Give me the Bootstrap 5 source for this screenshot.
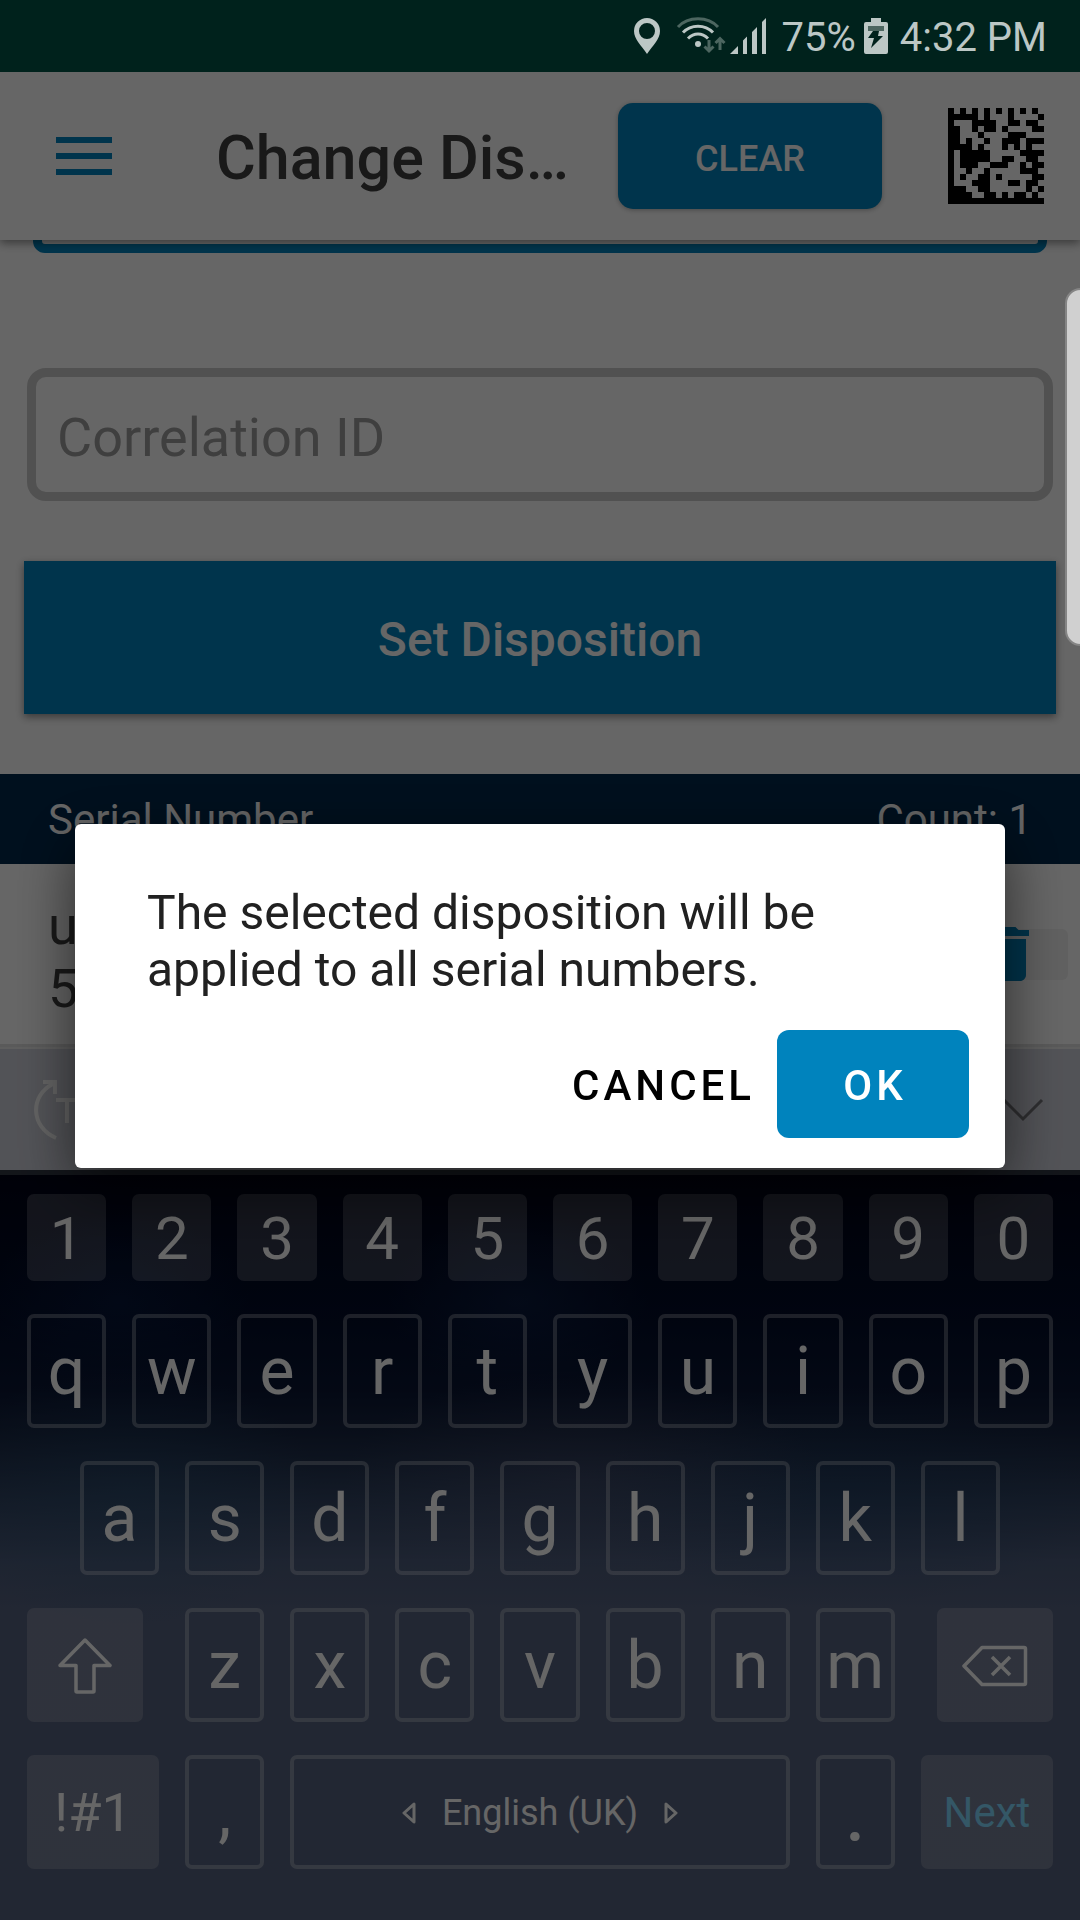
<!DOCTYPE html>
<html lang="en">
<head>
<meta charset="utf-8">
<meta name="viewport" content="width=device-width, initial-scale=1">
<title>Change Disposition</title>
<link href="https://cdn.jsdelivr.net/npm/bootstrap@5.3.0/dist/css/bootstrap.min.css" rel="stylesheet">
<style>
  :root { --brand: #0083bd; --ink: #404040; }
  body { font-family: Roboto, "Noto Sans", sans-serif; background: #fff; color: var(--ink); min-height: 100vh; }
  svg { display: block; flex: none; }

  .status-strip { height: 72px; padding: 0 33px; background: #00221c; color: #bcc7c5; font-size: 40px; line-height: 48px; position: relative; z-index: 1060; }
  .status-text { padding-top: 4px; }

  .app-bar { height: 168px; padding: 0 36px 0 56px; background: #fff; box-shadow: 0 3px 9px rgba(0,0,0,.45); position: relative; z-index: 1; }
  .app-title { font-size: 61px; line-height: 72px; font-weight: 500; padding: 4px 0 0 104px; }
  .btn-brand { --bs-btn-bg: var(--brand); --bs-btn-color: #fff; --bs-btn-border-width: 0; --bs-btn-hover-bg: #0074a8; --bs-btn-hover-color: #fff; font-weight: 500; }
  .btn-clear { width: 264px; height: 106px; padding: 6px 0 0; font-size: 36px; border-radius: 15px; box-shadow: 0 1px 5px rgba(0,0,0,.3); margin-right: 66px; }

  .field-focused { display: block; height: 104px; margin: -91px 33px 0; width: calc(100% - 66px); border: 9px solid var(--brand); border-radius: 12px; background: #fff; padding: 0 24px; }
  .field-plain { display: block; height: 133px; margin: 115px 27px 0; width: calc(100% - 54px); border: 9px solid #cbcbcb; border-radius: 19px; background: #fff; padding: 5px 21px 0; font-size: 54px; line-height: 64px; color: var(--ink); }
  .field-plain::placeholder { color: #9d9d9d; opacity: 1; }
  .btn-dispose { height: 153px; margin: 60px 24px; padding: 4px 0 0; width: calc(100% - 48px); font-size: 48px; border-radius: 0; box-shadow: 0 3px 8px rgba(0,0,0,.45); }

  .list-head { height: 90px; padding: 2px 48px 0; background: #00284b; color: #fff; font-size: 42px; line-height: 48px; }
  .serial-row { height: 180px; padding: 0 12px 0 48px; font-size: 54px; line-height: 63px; }
  .serial-text { padding-top: 6px; }
  .btn-trash { width: 120px; height: 51px; border: 0; border-radius: 6px; background: #f1f1f1; padding: 0 24px; overflow: visible; }
  .list-end { height: 5px; background: #e0e0e0; border-bottom: 2px solid #ececec; }

  .kb-tools { height: 121px; padding: 0 36px 0 34px; background: #ced0da; }
  .kb-pad {
    padding: 19px 27px 51px; gap: 33px; border-top: 5px solid #303743;
    background:
      radial-gradient(ellipse 130px 90px at 11% 17%, rgba(10,35,80,.4), transparent),
      radial-gradient(ellipse 130px 90px at 48% 17%, rgba(20,45,90,.4), transparent),
      radial-gradient(ellipse 240px 110px at 54% 41%, rgba(95,95,125,.28), transparent),
      radial-gradient(ellipse 190px 130px at 12% 43%, rgba(40,85,120,.34), transparent),
      radial-gradient(ellipse 260px 110px at 78% 43%, rgba(20,60,100,.3), transparent),
      linear-gradient(#000316 0, #030d2a 20%, #0a1634 29%, #182642 35%, #2f415f 43%, #4c5b7b 52%, #55617f 58%, #55627f);
  }
  .kb-row { gap: 26px; }
  .kb-row-inset { padding: 0 53px; }
  .kb-key { flex: 79 1 0; min-width: 0; height: 114px; padding: 2px 0 0; display: flex; align-items: center; justify-content: center; border: 0; box-shadow: inset 0 0 0 4px rgba(255,255,255,.29); border-radius: 7px; background: transparent; color: #fff; font-size: 66px; line-height: 78px; }
  .kb-num { height: 87px; font-size: 60px; }
  .kb-num, .kb-fn { box-shadow: none; background: rgba(255,255,255,.19); }
  .kb-shift { flex-grow: 116; }
  .kb-mode { flex-grow: 132; font-size: 54px; }
  .kb-next { flex-grow: 132; font-size: 42px; color: #82d9ff; }
  .kb-space { flex-grow: 499; font-size: 36px; gap: 26px; }
  .kb-dot { font-size: 84px; }

  .edge-handle { position: fixed; top: 288px; right: -16px; width: 31px; height: 358px; border: 2px solid #858585; border-radius: 17px; background: #d0d0d0; z-index: 1060; }

  .modal-backdrop.scrim { --bs-backdrop-opacity: .6; }
  .confirm { padding: 72px 75px 0; }
  .confirm .modal-dialog { max-width: none; margin: 0; min-height: 100%; }
  .confirm .modal-content { border: 0; border-radius: 6px; padding: 60px 36px 30px 72px; gap: 32px; box-shadow: 0 18px 60px rgba(0,0,0,.6); }
  .confirm-text { font-size: 48px; line-height: 57px; color: #212121; margin: 0; max-width: 760px; }
  .btn-dialog { height: 108px; font-size: 42px; font-weight: 500; letter-spacing: 4px; border-radius: 12px; }
  .btn-cancel { --bs-btn-color: #000; --bs-btn-border-width: 0; padding: 2px 22px 0; }
  .btn-ok { width: 192px; padding: 2px 0 0 4px; }
</style>
</head>
<body class="d-flex flex-column">

<header class="status-strip d-flex align-items-center justify-content-end">
  <svg width="26" height="36" viewBox="0 0 26 36" fill="#bcc7c5" aria-hidden="true"><path fill-rule="evenodd" d="M13 0a13 13 0 0 1 13 13c0 8-7 14-13 23C7 27 0 21 0 13A13 13 0 0 1 13 0zm0 5a8 8 0 1 0 0 16a8 8 0 0 0 0-16z"/></svg>
  <svg class="ms-3" width="50" height="38" viewBox="0 0 50 38" fill="none" aria-hidden="true">
    <g stroke-width="3"><path d="M2 10C12-1 32-1 42 10" stroke="#4d6660"/><path d="M7 15.500C15 7 29 7 37 15.500M12 21.500c6-6 14-6 20 0" stroke="#bcc7c5"/></g>
    <circle cx="22" cy="27" r="3" fill="#bcc7c5"/>
    <path d="M33 23v11M28.500 29.500L33 34l4.500-4.500M44 33V22M39.500 26L44 21.500L48.500 26" stroke="#4d6660" stroke-width="3"/>
  </svg>
  <svg class="ms-1" width="36" height="36" viewBox="0 0 36 36" fill="#bcc7c5" aria-hidden="true"><path d="M0 36L8 28v8zM13 22.500l4-4V36h-4zM22 14l5-5v27h-5zM32 4l4-4v36h-4z"/></svg>
  <span class="status-text ms-3">75%</span>
  <svg class="mx-2" width="24" height="36" viewBox="0 0 24 36" aria-hidden="true"><path fill="#bcc7c5" d="M7 0h10v4h5a2 2 0 0 1 2 2v28a2 2 0 0 1-2 2H2a2 2 0 0 1-2-2V6a2 2 0 0 1 2-2h5z"/><path fill="#4d6660" d="M4 8h16v5H4z"/><path fill="#00221c" d="M9 13h6l-1 5h5L7 30l3-10H4z"/></svg>
  <span class="status-text ms-1">4:32 PM</span>
</header>

<nav class="app-bar d-flex align-items-center">
  <button class="btn p-0 border-0" aria-label="Menu"><svg width="56" height="38" viewBox="0 0 56 38" fill="#0083bd"><path d="M0 0h56v6H0zM0 16h56v6H0zM0 32h56v6H0z"/></svg></button>
  <h1 class="app-title m-0 flex-grow-1 text-nowrap">Change Dis…</h1>
  <button class="btn btn-brand btn-clear">CLEAR</button>
  <svg width="96" height="96" viewBox="0 0 16 16" fill="#000" shape-rendering="crispEdges" role="img" aria-label="Scan code">
    <path d="M0 0h1v16H0zM0 15h16v1H0zM2 0h1v1H2zM4 0h1v1H4zM6 0h1v1H6zM8 0h1v1H8zM10 0h1v1h-1zM12 0h1v1h-1zM14 0h1v1h-1zM1 1h4v1H1zM6 1h1v1H6zM10 1h1v1h-1zM15 1h1v1h-1zM4 2h4v1H4zM10 2h2v1h-2zM13 2h2v1h-2zM1 3h1v1H1zM4 3h1v1H4zM6 3h2v1H6zM9 3h1v1H9zM14 3h2v1h-2zM1 4h1v1H1zM5 4h1v1H5zM10 4h3v1h-3zM1 5h1v1H1zM3 5h1v1H3zM6 5h1v1H6zM9 5h3v1H9zM13 5h3v1h-3zM1 6h3v1H1zM5 6h1v1H5zM9 6h1v1H9zM11 6h1v1h-1zM13 6h1v1h-1zM2 7h5v1H2zM12 7h4v1h-4zM2 8h5v1H2zM9 8h2v1H9zM13 8h2v1h-2zM2 9h3v1H2zM7 9h3v1H7zM12 9h1v1h-1zM14 9h2v1h-2zM3 10h1v1H3zM6 10h1v1H6zM12 10h3v1h-3zM2 11h1v1H2zM5 11h2v1H5zM8 11h1v1H8zM14 11h2v1h-2zM4 12h3v1H4zM10 12h2v1h-2zM13 12h2v1h-2zM1 13h2v1H1zM5 13h2v1H5zM13 13h1v1h-1zM15 13h1v1h-1zM1 14h3v1H1zM6 14h2v1H6zM9 14h1v1H9zM11 14h2v1h-2zM14 14h1v1h-1z"/>
  </svg>
</nav>

<main class="flex-grow-1">
  <input class="field-focused" type="text" aria-label="Disposition">
  <input class="field-plain" type="text" placeholder="Correlation ID" aria-label="Correlation ID">
  <button class="btn btn-brand btn-dispose d-block">Set Disposition</button>
  <div class="list-head d-flex align-items-center justify-content-between"><span>Serial Number</span><span>Count: 1</span></div>
  <div class="serial-row d-flex align-items-center justify-content-between">
    <div class="serial-text">u<br>5</div>
    <button class="btn-trash d-flex align-items-center" aria-label="Delete serial number"><svg width="72" height="72" viewBox="0 0 24 24" fill="#0083bd"><path d="M6 19c0 1.100.9 2 2 2h8c1.100 0 2-.9 2-2V7H6v12zM19 4h-3.500l-1-1h-5l-1 1H5v2h14V4z"/></svg></button>
  </div>
  <div class="list-end"></div>
</main>

<section aria-label="Keyboard">
  <div class="kb-tools d-flex align-items-center justify-content-between">
    <svg width="64" height="64" viewBox="0 0 64 64" fill="none" stroke="#fafafa" stroke-width="4" aria-hidden="true"><path d="M22 60C-4 49-4 17 19 6M9 4h12v12M22 22h22M33 22v23"/></svg>
    <svg width="42" height="24" viewBox="0 0 42 24" fill="none" stroke="#75757a" stroke-width="3" aria-hidden="true"><path d="M2 2l19 19L40 2"/></svg>
  </div>
  <div class="kb-pad d-flex flex-column">
    <div class="kb-row d-flex">
      <button class="kb-key kb-num">1</button><button class="kb-key kb-num">2</button><button class="kb-key kb-num">3</button><button class="kb-key kb-num">4</button><button class="kb-key kb-num">5</button><button class="kb-key kb-num">6</button><button class="kb-key kb-num">7</button><button class="kb-key kb-num">8</button><button class="kb-key kb-num">9</button><button class="kb-key kb-num">0</button>
    </div>
    <div class="kb-row d-flex">
      <button class="kb-key">q</button><button class="kb-key">w</button><button class="kb-key">e</button><button class="kb-key">r</button><button class="kb-key">t</button><button class="kb-key">y</button><button class="kb-key">u</button><button class="kb-key">i</button><button class="kb-key">o</button><button class="kb-key">p</button>
    </div>
    <div class="kb-row kb-row-inset d-flex">
      <button class="kb-key">a</button><button class="kb-key">s</button><button class="kb-key">d</button><button class="kb-key">f</button><button class="kb-key">g</button><button class="kb-key">h</button><button class="kb-key">j</button><button class="kb-key">k</button><button class="kb-key">l</button>
    </div>
    <div class="kb-row d-flex">
      <button class="kb-key kb-fn kb-shift me-3" aria-label="Shift"><svg width="54" height="56" viewBox="0 0 54 56" fill="none" stroke="#fff" stroke-width="3.500" stroke-linejoin="round"><path d="M27 2L52 27.500H36V53q0 1-1 1H19q-1 0-1-1V27.500H2z"/></svg></button>
      <button class="kb-key">z</button><button class="kb-key">x</button><button class="kb-key">c</button><button class="kb-key">v</button><button class="kb-key">b</button><button class="kb-key">n</button><button class="kb-key">m</button>
      <button class="kb-key kb-fn kb-shift ms-3" aria-label="Backspace"><svg width="66" height="42" viewBox="0 0 66 42" fill="none" stroke="#fff" stroke-width="3.500" stroke-linejoin="round"><path d="M20 2.500H62q1.500 0 1.500 1.500V38q0 1.500-1.500 1.500H20L2 21zM30 12l18 18M48 12L30 30"/></svg></button>
    </div>
    <div class="kb-row d-flex">
      <button class="kb-key kb-fn kb-mode">!#1</button><button class="kb-key">,</button>
      <button class="kb-key kb-space"><svg width="14" height="22" viewBox="0 0 14 22" fill="none" stroke="#fff" stroke-width="3" stroke-linejoin="round"><path d="M12 2v18L2 11z"/></svg><span>English (UK)</span><svg width="14" height="22" viewBox="0 0 14 22" fill="none" stroke="#fff" stroke-width="3" stroke-linejoin="round"><path d="M2 2v18l10-9z"/></svg></button>
      <button class="kb-key kb-dot">.</button><button class="kb-key kb-fn kb-next">Next</button>
    </div>
  </div>
</section>

<div class="modal-backdrop scrim show"></div>
<div class="edge-handle"></div>
<div class="modal confirm d-block show" role="dialog" aria-modal="true" aria-labelledby="confirmText">
  <div class="modal-dialog modal-dialog-centered">
    <div class="modal-content">
      <p class="confirm-text" id="confirmText">The selected disposition will be applied to all serial numbers.</p>
      <div class="d-flex justify-content-end">
        <button class="btn btn-dialog btn-cancel">CANCEL</button>
        <button class="btn btn-brand btn-dialog btn-ok">OK</button>
      </div>
    </div>
  </div>
</div>

<script src="https://cdn.jsdelivr.net/npm/bootstrap@5.3.0/dist/js/bootstrap.bundle.min.js"></script>
</body>
</html>
